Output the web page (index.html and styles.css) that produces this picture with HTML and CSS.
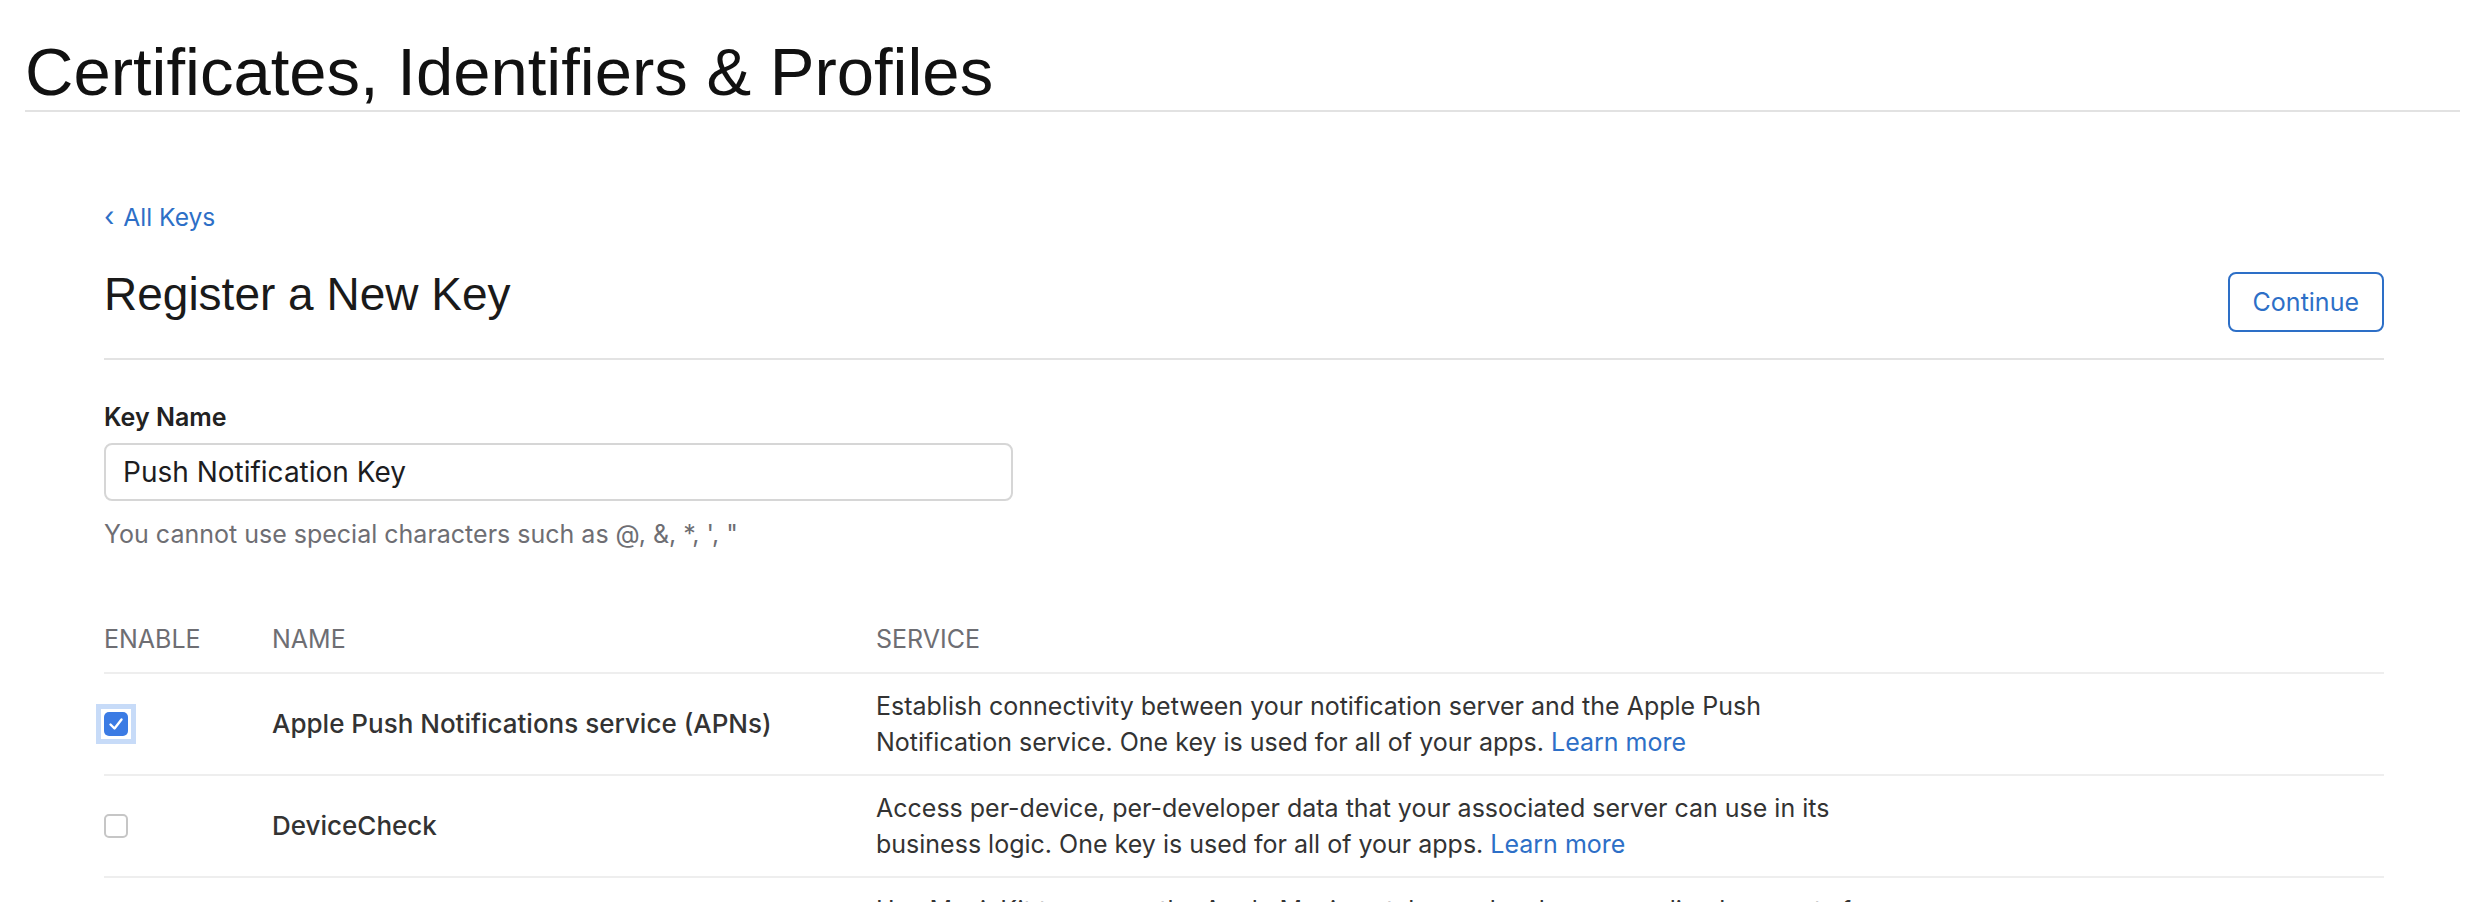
FILE: index.html
```html
<!DOCTYPE html>
<html lang="en">
<head>
<meta charset="utf-8">
<title>Register a New Key - Certificates, Identifiers &amp; Profiles</title>
<link rel="stylesheet" href="styles.css">
</head>
<body>
<header class="site-header">
  <h1 class="site-title">Certificates, Identifiers &amp; Profiles</h1>
</header>
<main class="content">
  <a class="back-link" href="#"><span class="back-chevron">‹</span> All Keys</a>
  <div class="page-head">
    <h2 class="page-title">Register a New Key</h2>
    <button class="btn-outline" type="button">Continue</button>
  </div>

  <section class="field">
    <label class="field-label" for="keyname">Key Name</label>
    <input class="field-input" id="keyname" type="text" value="Push Notification Key">
    <p class="field-hint">You cannot use special characters such as @, &amp;, *, ', "</p>
  </section>

  <div class="services">
    <div class="svc-row svc-head">
      <div class="svc-col">ENABLE</div>
      <div class="svc-col">NAME</div>
      <div class="svc-col">SERVICE</div>
    </div>
    <div class="svc-row">
      <div class="svc-enable">
        <span class="check-focus">
          <span class="checkbox is-checked">
            <svg viewBox="0 0 24 24" width="24" height="24"><polyline points="6.5,12.5 10.5,16.5 17.5,7.5" fill="none" stroke="#fff" stroke-width="2.4" stroke-linecap="round" stroke-linejoin="round"/></svg>
          </span>
        </span>
      </div>
      <div class="svc-name">Apple Push Notifications service (APNs)</div>
      <div class="svc-desc">Establish connectivity between your notification server and the Apple Push Notification service. One key is used for all of your apps. <a href="#" class="link">Learn more</a></div>
    </div>
    <div class="svc-row">
      <div class="svc-enable"><span class="checkbox"></span></div>
      <div class="svc-name">DeviceCheck</div>
      <div class="svc-desc">Access per-device, per-developer data that your associated server can use in its business logic. One key is used for all of your apps. <a href="#" class="link">Learn more</a></div>
    </div>
    <div class="svc-row">
      <div class="svc-enable"><span class="checkbox"></span></div>
      <div class="svc-name">MusicKit</div>
      <div class="svc-desc">Use MusicKit to access the Apple Music catalog and make personalized requests for authorized users. <a href="#" class="link">Learn more</a></div>
    </div>
  </div>
</main>
</body>
</html>
```

FILE: styles.css
```css
* { box-sizing: border-box; }

html, body {
  margin: 0;
  padding: 0;
  background: #fff;
}

body {
  font-family: "Inter", "Liberation Sans", sans-serif;
  font-size: 25px;
  line-height: 36px;
  letter-spacing: 0;
  color: #333;
}

.site-header {
  padding: 0 16px 0 25px;
}

.site-title {
  margin: 0;
  padding-top: 34px;
  font-family: "Liberation Sans", Arial, sans-serif;
  font-size: 67px;
  line-height: 76px;
  font-weight: 400;
  color: #111;
  border-bottom: 2px solid #e2e2e2;
}

.content {
  margin: 0 92px 0 104px;
  padding-top: 87px;
}

.back-link {
  display: block;
  width: max-content;
  font-size: 24.6px;
  color: #2d6fc7;
  text-decoration: none;
}

.back-chevron {
  display: inline-block;
  margin-right: 2px;
  font-size: 27px;
}

.page-head {
  display: flex;
  justify-content: space-between;
  align-items: flex-start;
  margin-top: 31px;
  padding-bottom: 26px;
  border-bottom: 2px solid #e3e3e3;
}

.page-title {
  margin: 0;
  font-family: "Liberation Sans", Arial, sans-serif;
  font-size: 46px;
  line-height: 56px;
  font-weight: 400;
  color: #1a1a1a;
}

.btn-outline {
  margin-top: 6px;
  height: 60px;
  padding: 0 23px;
  font-family: inherit;
  font-size: 25px;
  color: #2d6fc7;
  background: #fff;
  border: 2px solid #2d6fc7;
  border-radius: 8px;
}

.field {
  margin-top: 39px;
}

.field-label {
  display: block;
  font-weight: 600;
  color: #222;
}

.field-input {
  display: block;
  margin-top: 8px;
  width: 909px;
  height: 58px;
  padding: 0 17px;
  font-family: inherit;
  font-size: 28px;
  color: #1d1d1f;
  background: #fff;
  border: 2px solid #d6d6d6;
  border-radius: 8px;
  outline: none;
}

.field-hint {
  margin: 15px 0 0;
  color: #6e6e73;
}

.services {
  margin-top: 69px;
}

.svc-row {
  display: grid;
  grid-template-columns: 168px 604px 1010px;
  align-items: center;
  padding: 14px 0;
  border-bottom: 2px solid #eeeeee;
}

.svc-head {
  padding: 0 0 15px;
  color: #6e6e73;
}

.svc-enable {
  display: flex;
  align-items: center;
}

.check-focus {
  display: inline-flex;
  margin-left: -8px;
  padding: 3px;
  background: #fff;
  border: 5px solid #c7dbf8;
}

.checkbox {
  display: inline-flex;
  width: 24px;
  height: 24px;
  border: 2px solid #c6c6c6;
  border-radius: 5px;
  background: #fff;
}

.checkbox.is-checked {
  border: none;
  background: #3b7be4;
}

.svc-name {
  font-size: 26px;
  font-weight: 500;
  color: #333;
}

.svc-desc {
  color: #333;
}

.link {
  color: #2d6fc7;
  text-decoration: none;
}
```
